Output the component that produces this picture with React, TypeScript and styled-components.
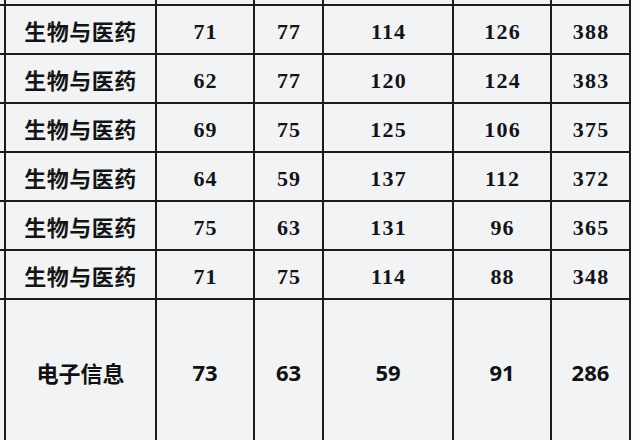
import React from "react";
import styled, { createGlobalStyle } from "styled-components";

const GlobalStyle = createGlobalStyle`
  html, body {
    margin: 0;
    padding: 0;
    background: #fbfbfc;
    height: 440px;
    overflow: hidden;
  }
`;

type Row = { name: string; values: number[] };

const rows: Row[] = [
  { name: "生物与医药", values: [71, 77, 114, 126, 388] },
  { name: "生物与医药", values: [62, 77, 120, 124, 383] },
  { name: "生物与医药", values: [69, 75, 125, 106, 375] },
  { name: "生物与医药", values: [64, 59, 137, 112, 372] },
  { name: "生物与医药", values: [75, 63, 131, 96, 365] },
  { name: "生物与医药", values: [71, 75, 114, 88, 348] },
];

const lastRow: Row = { name: "电子信息", values: [73, 63, 59, 91, 286] };

const App = () => {
  return (
    <>
      <GlobalStyle />
      <Table>
        {/* cut-off row above the visible area */}
        {Array.from({ length: 7 }).map((_, i) => (
          <Cell key={`top-${i}`} />
        ))}
        {rows.map((row, r) => (
          <React.Fragment key={r}>
            <Cell />
            <Cell>
              <NameText>{row.name}</NameText>
            </Cell>
            {row.values.map((v, i) => (
              <Cell key={i}>
                <NumText>{v}</NumText>
              </Cell>
            ))}
          </React.Fragment>
        ))}
        <Cell />
        <Cell>
          <BigText>{lastRow.name}</BigText>
        </Cell>
        {lastRow.values.map((v, i) => (
          <Cell key={i}>
            <BigNum>{v}</BigNum>
          </Cell>
        ))}
      </Table>
    </>
  );
};

export default App;

const Table = styled.div`
  display: grid;
  grid-template-columns: 4px 149px 96px 67px 128px 96px 77px;
  grid-template-rows: 4px repeat(6, 47px) 146px;
  gap: 2px;
  width: max-content;
  padding-right: 2px;
  background: #1c1c1e;
`;

const Cell = styled.div`
  background: #f2f3f5;
  display: flex;
  align-items: center;
  justify-content: center;
  overflow: hidden;
  white-space: nowrap;
`;

const NameText = styled.span`
  font-family: "Noto Sans CJK SC", "Noto Sans", sans-serif;
  font-size: 22px;
  font-weight: 700;
  color: #141414;
  letter-spacing: 0.5px;
`;

const NumText = styled.span`
  font-family: "Liberation Serif", serif;
  font-size: 22px;
  font-weight: 700;
  color: #141418;
  letter-spacing: 1.2px;
  padding-top: 4px;
  padding-left: 1.2px;
`;

const BigText = styled.span`
  font-family: "Noto Sans CJK SC", "Noto Sans", sans-serif;
  font-size: 22px;
  font-weight: 700;
  color: #111;
  padding-bottom: 3px;
`;

const BigNum = styled.span`
  font-family: "Noto Sans", sans-serif;
  font-size: 22px;
  font-weight: 700;
  color: #111;
  padding-bottom: 3px;
`;
